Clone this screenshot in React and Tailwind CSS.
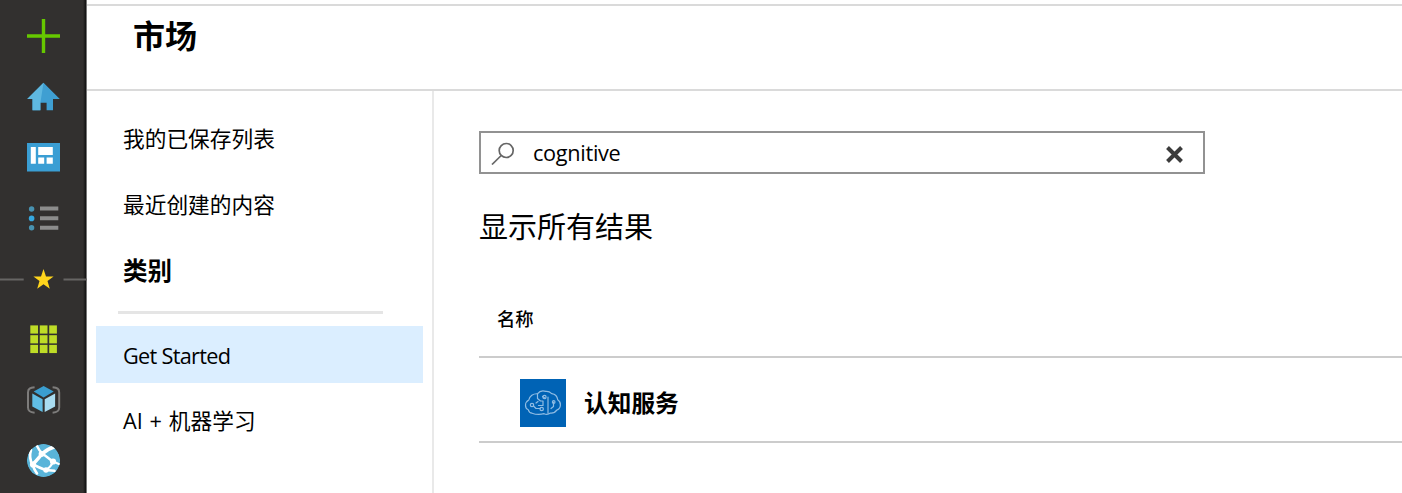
const cjk = "font-['Noto_Sans_CJK_SC',sans-serif]";
const latin = "font-['Open_Sans','Noto_Sans_CJK_SC',sans-serif]";

function PlusIcon() {
  return (
    <svg className="block shrink-0" width="87" height="61" viewBox="0 6 87 61">
      <path d="M43.5 19v34M27 36h33" stroke="#66c800" strokeWidth="3.4" />
    </svg>
  );
}

function HomeIcon() {
  return (
    <svg className="block shrink-0" width="87" height="60" viewBox="0 67 87 60">
      <path d="M43.5 82.8 59.8 99H53v11.200h-6.400v-7.400h-6.200v7.400h-7.900V99h-5.300z" fill="#3f9fd2" />
      <path d="M43.5 82.8 27.200 99h5.300v11.200h7.900v-7.400z" fill="#5fb8e0" />
    </svg>
  );
}

function DashboardIcon() {
  return (
    <svg className="block shrink-0" width="87" height="60" viewBox="0 127 87 60">
      <rect x="27" y="143" width="33" height="28.5" fill="#3a9ed4" />
      <path d="M30.8 147h5v16.700h-5zM38.2 147h14.600v8.100H38.2zM38.2 157.5h6v6.200h-6zM46.6 157.5h6.200v6.200h-6.200z" fill="#fff" />
    </svg>
  );
}

function ListIcon() {
  return (
    <svg className="block shrink-0" width="87" height="61" viewBox="0 187 87 61">
      <circle cx="31.6" cy="209" r="2.7" fill="#4892b1" />
      <circle cx="31.6" cy="218.4" r="2.8" fill="#35a8e0" />
      <circle cx="31.6" cy="227.7" r="2.7" fill="#4892b1" />
      <path d="M40 208.6h18.300M40 218.2h18.300M40 227.7h18.300" stroke="#8c8c8c" strokeWidth="4" />
    </svg>
  );
}

function FavoritesDivider() {
  return (
    <svg className="block shrink-0" width="87" height="61" viewBox="0 248 87 61">
      <path d="M0 279.5h23.700M63.5 279.5H87" stroke="#666564" strokeWidth="2" />
      <path d="m43.5 269 2.500 7.400h7.600l-6.100 4.700 2.300 7.700-6.300-4.600-6.300 4.600 2.300-7.700-6.100-4.700H41z" fill="#ffd51c" />
    </svg>
  );
}

function AllResourcesIcon() {
  const starts = [0, 9.5, 18.9];
  return (
    <svg className="block shrink-0" width="87" height="60" viewBox="0 309 87 60">
      {starts.map((dy) =>
        starts.map((dx) => (
          <rect key={`${dx}-${dy}`} x={30.3 + dx} y={325.4 + dy * 1.03} width="7.7" height="8.2" fill="#bedc27" />
        ))
      )}
    </svg>
  );
}

function ResourceGroupIcon() {
  return (
    <svg className="block shrink-0" width="87" height="61" viewBox="0 369 87 61">
      <path d="M34.600 387.300C30 387.800 28 388.700 28 392.500v15c0 3.600 2 4.700 6.600 5.200M52.600 387.300c4.600.5 6.600 1.400 6.600 5.200v15c0 3.600-2 4.700-6.600 5.200" fill="none" stroke="#7d7c7b" strokeWidth="2" />
      <path d="m43.600 386 10.100 5.500-10.100 6-9.900-6z" fill="#3a9ed0" />
      <path d="m32.300 393.400 10.300 5.900V412l-10.300-5.600z" fill="#61bde4" />
      <path d="M55.100 393.400 44.700 399.300V412l10.400-5.600z" fill="#a9dcf1" />
    </svg>
  );
}

function AppServiceIcon() {
  return (
    <svg className="block shrink-0" width="87" height="63" viewBox="0 430 87 63">
      <defs>
        <clipPath id="globe">
          <circle cx="43.500" cy="460.500" r="16.600" />
        </clipPath>
      </defs>
      <g clipPath="url(#globe)">
        <circle cx="43.500" cy="460.500" r="16.600" fill="#59b4d9" />
        <g fill="none" stroke="#fff" strokeLinecap="round">
          <path d="M37 446c1.300 3 3 5.500 6 8 3 2 5.500 4.500 10 7.500" strokeWidth="2.400" />
          <path d="M54 447c-5 1.500-9.500 4.500-12 7-3.500 4-6 7.500-9.500 10.500" strokeWidth="3.400" />
          <path d="M31 450c-1.500 5-1.200 10 1.500 14.500 1 3 2 5.500 4.500 9" strokeWidth="2.600" />
          <path d="M33 464.500c4 2 8 3.800 12.500 5.500l9 .8" strokeWidth="2.600" />
          <path d="M53 462c-1.500 3.500-4 6-7 8M53 461.500l7 3" strokeWidth="2" />
        </g>
        <g fill="#fff">
          <circle cx="41.500" cy="454" r="2.900" />
          <circle cx="53" cy="461.500" r="3.100" />
          <circle cx="46" cy="470" r="2.700" />
          <circle cx="33" cy="464.500" r="3.100" />
        </g>
      </g>
    </svg>
  );
}

function BrainIcon() {
  return (
    <svg className="block shrink-0" width="46" height="48" viewBox="0 0 46 48">
      <rect width="46" height="48" fill="#0063b5" />
      <g fill="none" stroke="#8fbce3" strokeWidth="1.200" strokeLinecap="round" strokeLinejoin="round">
        <path d="M12 34.200c-2.200-.2-3.200-1.700-3.700-3.400-2-.8-2.800-2.300-2.800-4.500s1.300-4.200 3.300-5.300c.8-4 4.400-6.500 8.600-6.200 2-2.600 5.500-3.400 8.500-2.400 2.200-.3 4.200.7 5.800 2.200 3.400.5 5.600 3 6 6.200 1.900 1.200 2.900 3.200 2.700 5.300-.2 2.500-1.300 4.300-3.700 5-1.400 2.200-3.500 3.200-6.200 3-2 1.300-4.400 1.500-6.400.6-3 .8-8.700.7-12.100-.5z" />
        <path d="M17.500 15v4.500l3 2.500h2.500v4.500h-4.500M28 18v16M22.500 17.500l3 2M13.500 27l2.500 2.500h4M16 24l2-1.500M31 29.500l2.500-2v-4.500" />
        <circle cx="12" cy="26" r="1.700" />
        <circle cx="24.500" cy="18" r="1.600" />
        <circle cx="21.700" cy="30" r="1.700" />
        <circle cx="33.700" cy="23" r="1.300" />
      </g>
    </svg>
  );
}

export default function App() {
  return (
    <div className={`flex h-[493px] w-[1402px] overflow-hidden bg-white text-black ${cjk}`}>
      <nav className="flex w-[87px] shrink-0 flex-col border-r border-[#777] bg-[linear-gradient(to_right,#32302f_83px,#111_86px)] pt-1.5">
        <PlusIcon />
        <HomeIcon />
        <DashboardIcon />
        <ListIcon />
        <FavoritesDivider />
        <AllResourcesIcon />
        <ResourceGroupIcon />
        <AppServiceIcon />
      </nav>

      <div className="flex min-w-0 grow flex-col pt-1">
        <header className="flex h-[87px] shrink-0 border-y-2 border-[#dadada] pl-[46px] pt-1.5">
          <h1 className="text-[32px] font-bold leading-[44px]">市场</h1>
        </header>

        <div className="flex grow">
          <aside className="flex w-[347px] shrink-0 flex-col border-r-2 border-[#e9e9e9] pl-[9px] pr-[9px] pt-[19px] text-[21.700px]">
            <a className="flex h-[56px] items-center pl-[27px]">我的已保存列表</a>
            <a className="mt-2.5 flex h-[56px] items-center pl-[27px]">最近创建的内容</a>
            <h2 className="mt-2.5 flex h-[56px] items-center pl-[27px] text-[24.500px] font-bold">类别</h2>
            <hr className="ml-[22px] mt-[13px] w-[265px] border-t-[3px] border-[#e5e5e5]" />
            <a className={`mt-3 flex h-[57px] items-center bg-[#dbeeff] pl-[27px] pt-[3px] tracking-[-0.7px] ${latin}`}>Get Started</a>
            <a className={`mt-[9px] flex h-[57px] items-center pl-[27px] pt-0.5 [word-spacing:1.2px] ${latin}`}>AI + 机器学习</a>
          </aside>

          <main className="flex min-w-0 grow flex-col pl-[45px] pt-10">
            <div className="flex h-[43px] w-[726px] shrink-0 items-center border-2 border-[#929292] pl-2.5 pr-[19px]">
              <svg width="24" height="24" viewBox="0 0 24 24" fill="none" stroke="#666" strokeWidth="1.700">
                <circle cx="15.200" cy="9.500" r="7" />
                <path d="M10.200 14.500 1 23.500" />
              </svg>
              <span className={`ml-[18px] grow pt-0.5 text-[21.700px] tracking-[-0.300px] ${latin}`}>cognitive</span>
              <svg className="mt-[3px]" width="19" height="19" viewBox="0 0 19 19" fill="none" stroke="#3c3c3c" strokeWidth="4">
                <path d="m2.500 2.500 14 14M16.500 2.500l-14 14" />
              </svg>
            </div>
            <h2 className="mt-[29px] text-[29px] leading-[44px]">显示所有结果</h2>
            <div className="mt-[58px] h-[53px] shrink-0 border-b-2 border-[#ccc] pl-[18px] text-[18.300px] font-medium leading-[27px]">名称</div>
            <div className="flex h-[85px] shrink-0 items-center border-b-2 border-[#ccc] pl-[41px] pt-[7px]">
              <BrainIcon />
              <span className="ml-[18px] text-[23.700px] font-bold">认知服务</span>
            </div>
          </main>
        </div>
      </div>
    </div>
  );
}
